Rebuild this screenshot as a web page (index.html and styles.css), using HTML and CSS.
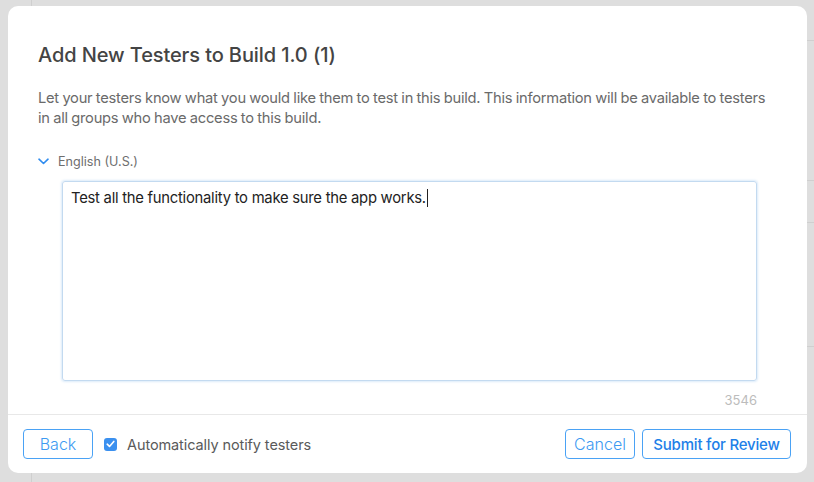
FILE: index.html
```html
<!DOCTYPE html>
<html>
<head>
<meta charset="utf-8">
<link rel="stylesheet" href="styles.css">
</head>
<body>
<div class="modal">
  <div class="body">
    <h1 class="title">Add New Testers to Build 1.0 (1)</h1>
    <p class="desc">Let your testers know what you would like them to test in this build. This information will be available to testers in all groups who have access to this build.</p>
    <div class="lang">
      <svg class="chev" width="11" height="7" viewBox="0 0 11 7"><path d="M1 1.2 L5.5 5.5 L10 1.2" fill="none" stroke="#2f8cef" stroke-width="1.6" stroke-linecap="round" stroke-linejoin="round"/></svg>
      <span>English (U.S.)</span>
    </div>
    <div class="field">
      <div class="textarea"><span>Test all the functionality to make sure the app works.</span><span class="caret"></span></div>
      <div class="count">3546</div>
    </div>
  </div>
  <div class="footer">
    <button class="btn">Back</button>
    <label class="check">
      <span class="box"><svg width="9" height="8" viewBox="0 0 9 8"><path d="M1.2 4.2 L3.5 6.4 L7.8 1.4" fill="none" stroke="#fff" stroke-width="1.6" stroke-linecap="round" stroke-linejoin="round"/></svg></span>
      <span class="check-label">Automatically notify testers</span>
    </label>
    <div class="spacer"></div>
    <button class="btn">Cancel</button>
    <button class="btn primary">Submit for Review</button>
  </div>
</div>
</body>
</html>
```

FILE: styles.css
```css
html, body {
  margin: 0;
  padding: 0;
}
body {
  width: 814px;
  height: 482px;
  overflow: hidden;
  background-color: #dedede;
  background-image:
    linear-gradient(#cfcfcf, #cfcfcf),
    linear-gradient(#cfcfcf, #cfcfcf),
    linear-gradient(#cfcfcf, #cfcfcf),
    linear-gradient(#cfcfcf, #cfcfcf),
    linear-gradient(#cfcfcf, #cfcfcf);
  background-repeat: no-repeat;
  background-size: 1px 482px, 7px 1px, 7px 1px, 7px 1px, 7px 1px;
  background-position: 31px 0, 807px 40px, 807px 180px, 807px 222px, 807px 346px;
  font-family: Inter, "Open Sans", "Liberation Sans", sans-serif;
  padding: 6px 0 0 8px;
  box-sizing: border-box;
}
.modal {
  width: 799px;
  height: 467px;
  background: #fff;
  border-radius: 10px;
  display: flex;
  flex-direction: column;
  box-sizing: border-box;
}
.body {
  padding: 37px 30px 0 30px;
  flex: 1;
}
.title {
  margin: 0;
  font-size: 20px;
  line-height: 24px;
  font-weight: 500;
  color: #444;
  letter-spacing: -0.1px;
}
.desc {
  margin: 21px 0 0 0;
  font-size: 14.7px;
  line-height: 20px;
  color: #6a6a6a;
  letter-spacing: -0.25px;
  word-spacing: -0.4px;
}
.lang {
  margin-top: 23px;
  display: flex;
  align-items: center;
  height: 20px;
  font-size: 12.6px;
  color: #6e6e6e;
}
.chev {
  margin-right: 9px;
}
.field {
  margin: 10px 20px 0 24px;
}
.textarea {
  height: 200px;
  box-sizing: border-box;
  border: 1px solid #c3daf0;
  border-radius: 3px;
  box-shadow: 0 0 2px 1px rgba(120, 180, 235, 0.25);
  padding: 6px 8px;
  font-size: 14.8px;
  line-height: 20px;
  color: #222;
  letter-spacing: -0.25px;
}
.caret {
  display: inline-block;
  width: 1px;
  height: 18px;
  background: #222;
  vertical-align: -4px;
  margin-left: 1px;
}
.count {
  margin-top: 11px;
  text-align: right;
  font-size: 13px;
  line-height: 16px;
  color: #bcbcbc;
}
.footer {
  border-top: 1px solid #e8e8e8;
  margin-top: 6px;
  padding: 14px 16px 16px 15px;
  display: flex;
  align-items: center;
}
.btn {
  height: 30px;
  width: 70px;
  padding: 0;
  box-sizing: border-box;
  border: 1px solid #4aa2f5;
  border-radius: 4px;
  background: #fff;
  color: #3d9af2;
  font-family: inherit;
  font-size: 16px;
  font-weight: 300;
  white-space: nowrap;
}
.btn + .btn {
  margin-left: 7px;
}
.btn.primary {
  width: 149px;
  color: #1e80e8;
  font-weight: 500;
  font-size: 15px;
  letter-spacing: -0.2px;
}
.check {
  display: flex;
  align-items: center;
  margin-left: 11px;
}
.box {
  width: 13px;
  height: 13px;
  border-radius: 3px;
  background: #3b90ef;
  display: flex;
  align-items: center;
  justify-content: center;
}
.check-label {
  margin-left: 10px;
  font-size: 14.5px;
  color: #5a5a5a;
  letter-spacing: -0.1px;
}
.spacer {
  flex: 1;
}
```
